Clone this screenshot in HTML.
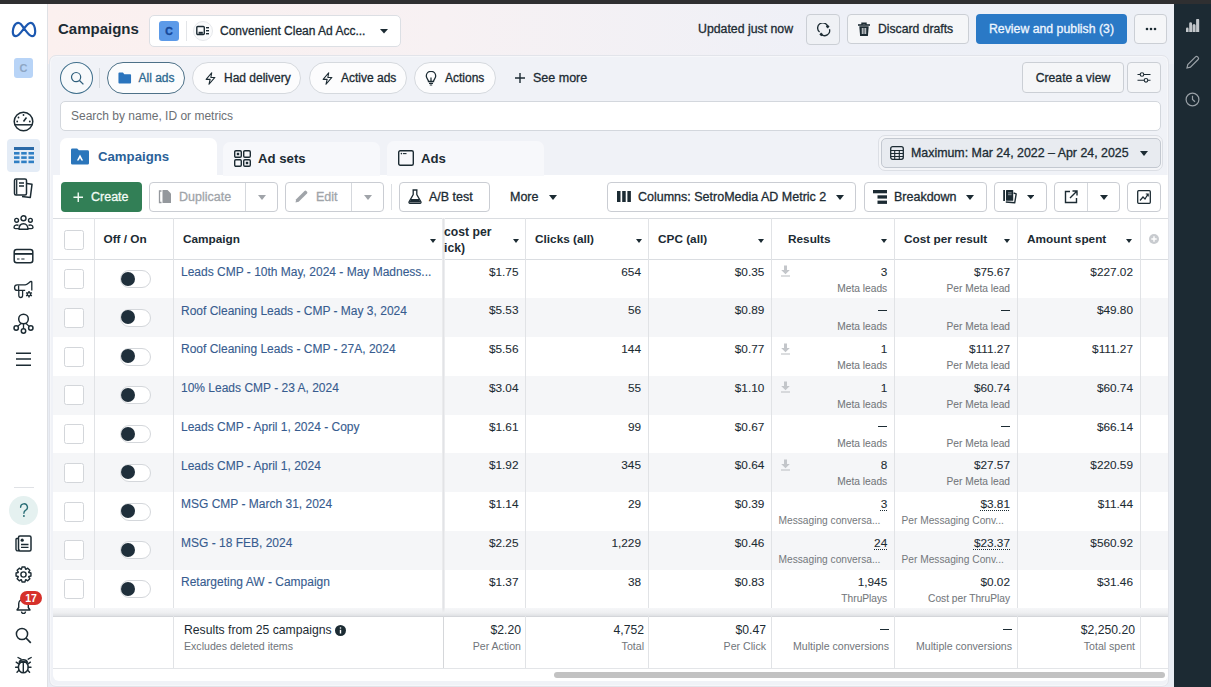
<!DOCTYPE html>
<html><head><meta charset="utf-8">
<style>
*{box-sizing:border-box;margin:0;padding:0}
html,body{width:1211px;height:687px;overflow:hidden;background:#e9edf4;font-family:"Liberation Sans",sans-serif;color:#1c2b33;position:relative}
.a{position:absolute}
.topbar{left:0;top:0;width:1211px;height:4px;background:#2f2f31}
.lsb{left:0;top:4px;width:48px;height:683px;background:#fff;border-right:1px solid #dfe1e5}
.rsb{left:1174px;top:4px;width:37px;height:683px;background:#1c2a33}
.hdr{left:48px;top:4px;width:1126px;height:60px;background:linear-gradient(90deg,#fbf0ef 0%,#f7f1f3 35%,#eef0f7 70%,#edf0f6 100%)}
.panel{left:49px;top:55px;width:1120px;height:632px;background:#f0f2f7;border:1px solid #e2e4ea;border-radius:7px;box-shadow:inset 0 0 0 1px #f6f7fa}
.btn{-webkit-text-stroke:0.3px currentColor;position:absolute;background:#f5f6f8;border:1px solid #cbcfd5;border-radius:4px;font-size:12.2px;color:#1c2b33;display:flex;align-items:center;white-space:nowrap}
.wbtn{position:absolute;background:#fff;border:1px solid #cacdd3;border-radius:4px;font-size:12.5px;color:#1c2b33;display:flex;align-items:center;white-space:nowrap}
.pill{-webkit-text-stroke:0.3px currentColor;position:absolute;top:62px;height:32px;border:1px solid #d5d9de;border-radius:16px;background:#fcfcfd;font-size:12px;display:flex;align-items:center;white-space:nowrap;color:#1c2b33}
svg{display:block}
.t{position:absolute;white-space:nowrap}
.m{-webkit-text-stroke:0.3px currentColor}
</style></head><body>
<div class="a hdr"></div>
<div class="a topbar"></div>
<div class="a lsb"></div>
<div class="a rsb"></div>
<div class="a panel"></div>

<!-- header -->
<div class="t" style="left:58px;top:20px;font-size:15px;font-weight:700;color:#1c2b33">Campaigns</div>
<div class="a" style="left:149px;top:15px;width:252px;height:32px;background:#fff;border:1px solid #dcdfe4;border-radius:5px"></div>
<div class="a" style="left:159px;top:21px;width:20px;height:20px;background:#5c9ae8;border-radius:3px;color:#17499a;font-size:10.5px;font-weight:700;text-align:center;line-height:20px;-webkit-text-stroke:0.4px #17499a">C</div>
<div class="a" style="left:186px;top:21px;width:1px;height:20px;background:#e3e5e8"></div>
<div class="a" style="left:193px;top:21px;width:20px;height:20px;border-radius:50%;background:#fafbfc;border:1px solid #e6e8eb"></div>
<svg class="a" style="left:196px;top:25px" width="14" height="12" viewBox="0 0 14 12"><rect x="0.8" y="1.5" width="7.5" height="8" rx="1" fill="none" stroke="#1c2b33" stroke-width="1.4"/><rect x="2.6" y="6.8" width="4.2" height="2" fill="#1c2b33"/><rect x="10" y="2" width="3" height="1.4" fill="#1c2b33"/><rect x="10" y="5" width="3" height="1.4" fill="#1c2b33"/><rect x="10" y="8" width="3" height="1.4" fill="#1c2b33"/></svg>
<div class="t m" style="left:220px;top:24px;font-size:12px;color:#1c2b33">Convenient Clean Ad Acc...</div>
<svg class="a" style="left:380px;top:29px" width="8" height="5" viewBox="0 0 9 6" preserveAspectRatio="none"><path d="M0 0H9L4.5 5.5Z" fill="#1c2b33"/></svg>

<div class="t m" style="left:698px;top:22px;font-size:12.3px;color:#1c2b33">Updated just now</div>
<div class="btn" style="left:806px;top:14px;width:34px;height:31px;justify-content:center;border-radius:4px;background:#eff1f5">
<svg width="15" height="15" viewBox="0 0 16 16" style="margin-left:2px;margin-top:1px"><path d="M11.39 3.67A5.5 5.5 0 1 0 2.77 9.7" fill="none" stroke="#1c2b33" stroke-width="1.4"/><path d="M13.34 6.67A5.5 5.5 0 0 1 4.46 12.21" fill="none" stroke="#1c2b33" stroke-width="1.4"/><rect x="10" y="2.4" width="2.8" height="2.8" fill="#1c2b33" transform="rotate(-52 11.4 3.8)"/><rect x="3.1" y="10.8" width="2.8" height="2.8" fill="#1c2b33" transform="rotate(130 4.5 12.2)"/></svg></div>
<div class="btn" style="left:847px;top:14px;width:122px;height:30px;padding-left:9px">
<svg width="14" height="15" viewBox="0 0 14 15"><path d="M1 3H13" stroke="#1c2b33" stroke-width="1.6"/><path d="M5 3V1.3H9V3" fill="none" stroke="#1c2b33" stroke-width="1.4"/><path d="M2.3 4.2H11.7L10.9 14H3.1Z" fill="#1c2b33"/><path d="M5.3 6V12M7 6V12M8.7 6V12" stroke="#f5f6f8" stroke-width="0.9"/></svg>
<span class="m" style="margin-left:7px">Discard drafts</span></div>
<div class="a" style="left:976px;top:14px;width:151px;height:30px;background:#2a79c6;border-radius:4px;color:#eef6ff;font-size:12.3px;text-align:center;line-height:31px;-webkit-text-stroke:0.3px #eef6ff">Review and publish (3)</div>
<div class="btn" style="left:1134px;top:14px;width:33px;height:30px;justify-content:center"><svg width="12" height="4" viewBox="0 0 12 4"><circle cx="2" cy="2" r="1.3" fill="#1c2b33"/><circle cx="6" cy="2" r="1.3" fill="#1c2b33"/><circle cx="10" cy="2" r="1.3" fill="#1c2b33"/></svg></div>

<!-- right sidebar icons -->
<svg class="a" style="left:1185px;top:19px" width="15" height="14" viewBox="0 0 15 14"><path d="M1 13V9.8A0.8 0.8 0 0 1 3.6 9.8V13ZM4.2 13V4.6A1.4 1.4 0 0 1 7 4.6V13ZM7.5 13V6.5A1.4 1.4 0 0 1 10.6 6.5V13ZM11.1 13V1.2A0.6 0.6 0 0 1 14.2 1.2V13Z" fill="#c3c7cb"/></svg>
<svg class="a" style="left:1185px;top:55px" width="15" height="15" viewBox="0 0 15 15"><path d="M2 13L2.8 9.6L10.5 1.9A1.5 1.5 0 0 1 12.6 1.9L13.1 2.4A1.5 1.5 0 0 1 13.1 4.5L5.4 12.2Z" fill="none" stroke="#9aa1a7" stroke-width="1.2"/></svg>
<svg class="a" style="left:1185px;top:92px" width="15" height="15" viewBox="0 0 15 15"><circle cx="7.5" cy="7.5" r="6.4" fill="none" stroke="#9aa1a7" stroke-width="1.2"/><path d="M7.5 3.8V7.5L10 9.8" fill="none" stroke="#9aa1a7" stroke-width="1.2"/></svg>

<!-- left sidebar -->
<svg class="a" style="left:11px;top:21px" width="26" height="17" viewBox="0 0 26 17"><path d="M13 7.5C11 4 9.5 1.8 7.3 1.8C3.8 1.8 1.8 7 1.8 10.8C1.8 13.6 3.1 15.2 5 15.2C7.5 15.2 9.5 12 13 7.5C16 3.5 17.5 1.8 19.6 1.8C22.6 1.8 24.2 6.6 24.2 10.2C24.2 13.4 23.1 15.2 21 15.2C18.5 15.2 16.5 12 13 7.5Z" fill="none" stroke="#1c58b0" stroke-width="2.2" stroke-linejoin="round"/></svg>
<div class="a" style="left:14px;top:58px;width:19px;height:20px;background:#b8d4f7;border-radius:3px;color:#8ea6c4;font-size:11px;font-weight:700;text-align:center;line-height:20px">C</div>
<svg class="a" style="left:13px;top:111px" width="21" height="21" viewBox="0 0 21 21"><circle cx="10.5" cy="10.5" r="9.3" fill="none" stroke="#1c2b33" stroke-width="1.5"/><path d="M1.8 13.8H19.2" stroke="#1c2b33" stroke-width="1.5"/><path d="M10.5 10.5L13.5 6.5" stroke="#1c2b33" stroke-width="1.5"/><circle cx="10.5" cy="4" r="0.9" fill="#1c2b33"/><circle cx="5.5" cy="6.5" r="0.9" fill="#1c2b33"/><circle cx="4.2" cy="10.5" r="0.9" fill="#1c2b33"/><circle cx="16.8" cy="10.5" r="0.9" fill="#1c2b33"/></svg>
<div class="a" style="left:7px;top:139px;width:33px;height:33px;background:#e4ecf6;border-radius:4px"></div>
<svg class="a" style="left:14px;top:147px" width="20" height="17" viewBox="0 0 20 17"><rect x="0" y="0" width="20" height="3" fill="#2a6aa8"/><rect x="0" y="5" width="5.5" height="2.6" fill="#2f7fc4"/><rect x="7.2" y="5" width="5.5" height="2.6" fill="#2f7fc4"/><rect x="14.5" y="5" width="5.5" height="2.6" fill="#2f7fc4"/><rect x="0" y="9.3" width="5.5" height="2.6" fill="#2f7fc4"/><rect x="7.2" y="9.3" width="5.5" height="2.6" fill="#2f7fc4"/><rect x="14.5" y="9.3" width="5.5" height="2.6" fill="#2f7fc4"/><rect x="0" y="13.6" width="5.5" height="2.6" fill="#2f7fc4"/><rect x="7.2" y="13.6" width="5.5" height="2.6" fill="#2f7fc4"/><rect x="14.5" y="13.6" width="5.5" height="2.6" fill="#2f7fc4"/></svg>
<svg class="a" style="left:13px;top:178px" width="21" height="21" viewBox="0 0 21 21"><path d="M7 4.5L19 6.3L17.3 19.5L9 18.5" fill="#fff" stroke="#1c2b33" stroke-width="1.5" stroke-linejoin="round"/><rect x="1.5" y="1" width="12" height="16" rx="1.5" fill="#fff" stroke="#1c2b33" stroke-width="1.5"/><path d="M3.7 1.5V16.5" stroke="#1c2b33" stroke-width="1.3"/><path d="M6 5H11M6 8H11" stroke="#1c2b33" stroke-width="1.3"/></svg>
<svg class="a" style="left:13px;top:215px" width="21" height="16" viewBox="0 0 21 16"><circle cx="10.5" cy="3.2" r="2.5" fill="none" stroke="#1c2b33" stroke-width="1.4"/><circle cx="3.6" cy="5.3" r="1.9" fill="none" stroke="#1c2b33" stroke-width="1.4"/><circle cx="17.4" cy="5.3" r="1.9" fill="none" stroke="#1c2b33" stroke-width="1.4"/><path d="M6 14.3C6 10.5 7.8 8.8 10.5 8.8C13.2 8.8 15 10.5 15 14.3Z" fill="none" stroke="#1c2b33" stroke-width="1.4" stroke-linejoin="round"/><path d="M5.5 10.5C4.5 9.5 1 9.8 1 12.5C1 13.3 1.5 13.6 2.5 13.6H6" fill="none" stroke="#1c2b33" stroke-width="1.4"/><path d="M15.5 10.5C16.5 9.5 20 9.8 20 12.5C20 13.3 19.5 13.6 18.5 13.6H15" fill="none" stroke="#1c2b33" stroke-width="1.4"/></svg>
<svg class="a" style="left:13px;top:248px" width="21" height="16" viewBox="0 0 21 16"><rect x="1.2" y="1.5" width="18.6" height="13.2" rx="2.5" fill="none" stroke="#1c2b33" stroke-width="1.5"/><rect x="1" y="5" width="19" height="1.8" fill="#1c2b33"/><path d="M4 11H6.5M8.3 11H11.5" stroke="#1c2b33" stroke-width="1.2"/></svg>
<svg class="a" style="left:13px;top:280px" width="21" height="19" viewBox="0 0 21 19"><path d="M12.2 10.4H4.3A2.75 2.75 0 0 1 4.3 4.9H12.2C14.5 4.9 16 2.2 18 1.4Q18.8 1.1 18.8 2V10.4" fill="none" stroke="#1c2b33" stroke-width="1.3" stroke-linejoin="round"/><path d="M5.6 5.4V10.4" stroke="#1c2b33" stroke-width="1.3"/><path d="M5.8 10.4V15.6A1.9 1.9 0 0 0 9.6 15.6V10.4" fill="none" stroke="#1c2b33" stroke-width="1.3"/><g transform="translate(16,14.3)"><circle r="2.3" fill="#1c2b33"/><path d="M0 -3.3V3.3M-2.86 -1.65L2.86 1.65M-2.86 1.65L2.86 -1.65" stroke="#1c2b33" stroke-width="1.5"/><circle r="1" fill="#fff"/></g></svg>
<svg class="a" style="left:13px;top:313px" width="21" height="21" viewBox="0 0 21 21"><circle cx="10.5" cy="6" r="4.8" fill="none" stroke="#1c2b33" stroke-width="1.5"/><circle cx="3.2" cy="15" r="2.2" fill="none" stroke="#1c2b33" stroke-width="1.5"/><circle cx="10.5" cy="18" r="2.2" fill="none" stroke="#1c2b33" stroke-width="1.5"/><circle cx="17.8" cy="15" r="2.2" fill="none" stroke="#1c2b33" stroke-width="1.5"/><path d="M10.5 10.8V15.8M8.2 10.2L4.8 13.4M12.8 10.2L16.2 13.4" stroke="#1c2b33" stroke-width="1.3"/></svg>
<svg class="a" style="left:15px;top:351px" width="17" height="16" viewBox="0 0 17 16"><path d="M1 2.3H16M1 8H16M1 14.3H16" stroke="#1c2b33" stroke-width="1.4"/></svg>
<div class="a" style="left:14px;top:487px;width:20px;height:1px;background:#dfe1e5"></div>
<div class="a" style="left:9px;top:496px;width:29px;height:29px;border-radius:50%;background:#e5f1f0"></div>
<svg class="a" style="left:19px;top:503px" width="10" height="15" viewBox="0 0 10 15"><path d="M1.6 4.2A3.4 3.4 0 1 1 6.4 7.3C5.3 8 4.9 8.6 4.9 10.2" fill="none" stroke="#2b6e76" stroke-width="1.4" stroke-linecap="round"/><circle cx="4.9" cy="13" r="0.95" fill="#2b6e76"/></svg>
<svg class="a" style="left:15px;top:535px" width="17" height="17" viewBox="0 0 17 17"><path d="M3.5 3.5H1.8A1 1 0 0 0 1 4.5V14.5A1.8 1.8 0 0 0 4.5 14.5" fill="none" stroke="#1c2b33" stroke-width="1.4"/><rect x="3.5" y="1" width="12.5" height="15" rx="1.5" fill="none" stroke="#1c2b33" stroke-width="1.5"/><circle cx="7.2" cy="5.2" r="1.6" fill="#1c2b33"/><path d="M6 9.5H13.5M6 12.3H13.5" stroke="#1c2b33" stroke-width="1.3"/></svg>
<svg class="a" style="left:15px;top:566px" width="17" height="17" viewBox="0 0 17 17"><path d="M15.95 6.99 L15.95 10.01 L13.83 10.51 L13.69 10.85 L14.83 12.70 L12.70 14.83 L10.85 13.69 L10.51 13.83 L10.01 15.95 L6.99 15.95 L6.49 13.83 L6.15 13.69 L4.30 14.83 L2.17 12.70 L3.31 10.85 L3.17 10.51 L1.05 10.01 L1.05 6.99 L3.17 6.49 L3.31 6.15 L2.17 4.30 L4.30 2.17 L6.15 3.31 L6.49 3.17 L6.99 1.05 L10.01 1.05 L10.51 3.17 L10.85 3.31 L12.70 2.17 L14.83 4.30 L13.69 6.15 L13.83 6.49Z" fill="none" stroke="#1c2b33" stroke-width="1.4" stroke-linejoin="round"/><circle cx="8.5" cy="8.5" r="2.6" fill="none" stroke="#1c2b33" stroke-width="1.4"/></svg>
<svg class="a" style="left:15px;top:597px" width="17" height="17" viewBox="0 0 17 17"><path d="M2 13H15L13.3 10.5V7A4.8 4.8 0 0 0 3.7 7V10.5Z" fill="none" stroke="#1c2b33" stroke-width="1.4" stroke-linejoin="round"/><path d="M6.5 14.5A2 2 0 0 0 10.5 14.5" fill="none" stroke="#1c2b33" stroke-width="1.4"/></svg>
<div class="a" style="left:20px;top:591px;width:22px;height:14px;border-radius:7px;background:#d6312b;color:#fff;font-size:10.5px;font-weight:700;text-align:center;line-height:14px">17</div>
<svg class="a" style="left:15px;top:627px" width="17" height="17" viewBox="0 0 17 17"><circle cx="7" cy="7" r="5.6" fill="none" stroke="#1c2b33" stroke-width="1.5"/><path d="M11 11L15.8 15.8" stroke="#1c2b33" stroke-width="1.7"/></svg>
<svg class="a" style="left:13px;top:655px" width="21" height="19" viewBox="0 0 21 19"><path d="M5 2.5L8 4.2M18.2 2.5L15.2 4.2" stroke="#1c2b33" stroke-width="1.4" stroke-linecap="round"/><ellipse cx="10.3" cy="12.2" rx="4.9" ry="5.6" fill="none" stroke="#1c2b33" stroke-width="1.5"/><path d="M6.2 7.3A4.2 3.4 0 0 1 14.4 7.3Z" fill="none" stroke="#1c2b33" stroke-width="1.5" stroke-linejoin="round"/><path d="M10.3 7.3V17.6" stroke="#1c2b33" stroke-width="1.4"/><path d="M5.6 8.8L3.2 7.2M5.4 12.2H2.6M5.9 15.2L4 17.2M15 8.8L17.4 7.2M15.2 12.2H18M14.7 15.2L16.6 17.2" stroke="#1c2b33" stroke-width="1.4" stroke-linecap="round"/></svg>

<!-- filter row -->
<div class="a" style="left:60px;top:62px;width:33px;height:32px;border-radius:50%;border:1px solid #3f6f8c;background:#f7f9fb"></div>
<svg class="a" style="left:70px;top:71px" width="15" height="15" viewBox="0 0 16 16"><circle cx="6.5" cy="6.5" r="4.9" fill="none" stroke="#2f5f7c" stroke-width="1.3"/><path d="M10.1 10.1L14.3 14.3" stroke="#2f5f7c" stroke-width="1.4"/></svg>
<div class="a" style="left:99px;top:68px;width:1px;height:20px;background:#d5d9de"></div>
<div class="pill" style="left:107px;width:78px;border-color:#4d7188;background:#fbfcfd;padding-left:10px;color:#2b6890">
<svg width="13.5" height="12" viewBox="0 0 15 13"><path d="M0.5 1.5A1 1 0 0 1 1.5 0.5H5.5L7 2.2H13.5A1 1 0 0 1 14.5 3.2V11.5A1 1 0 0 1 13.5 12.5H1.5A1 1 0 0 1 0.5 11.5Z" fill="#2a74bd"/></svg><span style="margin-left:7px">All ads</span></div>
<div class="pill" style="left:192px;width:109px;padding-left:10px">
<svg width="13" height="15" viewBox="0 0 14 15" style="margin-left:1px"><path d="M8.3 1.3L2.3 8.4H6.6L5.4 13.7L11.7 6.4H7.4Z" fill="none" stroke="#1c2b33" stroke-width="1.2" stroke-linejoin="round"/></svg><span style="margin-left:7px">Had delivery</span></div>
<div class="pill" style="left:309px;width:98px;padding-left:10px">
<svg width="13" height="15" viewBox="0 0 14 15" style="margin-left:1px"><path d="M8.3 1.3L2.3 8.4H6.6L5.4 13.7L11.7 6.4H7.4Z" fill="none" stroke="#1c2b33" stroke-width="1.2" stroke-linejoin="round"/></svg><span style="margin-left:7px">Active ads</span></div>
<div class="pill" style="left:414px;width:82px;padding-left:10px">
<svg width="12" height="15" viewBox="0 0 12 15"><path d="M3.5 10.5C3.5 8.5 1.3 7.5 1.3 5A4.7 4.7 0 0 1 10.7 5C10.7 7.5 8.5 8.5 8.5 10.5Z" fill="none" stroke="#1c2b33" stroke-width="1.3"/><path d="M4 12.3H8M4.8 14H7.2M6 10.5V6.5" stroke="#1c2b33" stroke-width="1.2"/></svg><span style="margin-left:8px">Actions</span></div>
<svg class="a" style="left:514px;top:72px" width="12" height="12" viewBox="0 0 12 12"><path d="M6 1V11M1 6H11" stroke="#1c2b33" stroke-width="1.4"/></svg>
<div class="t m" style="left:533px;top:71px;font-size:12.5px;color:#1c2b33">See more</div>
<div class="btn" style="left:1022px;top:62px;width:102px;height:31px;justify-content:center">Create a view</div>
<div class="btn" style="left:1127px;top:62px;width:34px;height:31px;justify-content:center"><svg width="14" height="11" viewBox="0 0 14 11"><path d="M0.5 2.5H13.5M0.5 8.3H13.5" stroke="#1c2b33" stroke-width="1.1"/><circle cx="5" cy="2.5" r="1.8" fill="#f5f6f8" stroke="#1c2b33" stroke-width="1.1"/><circle cx="9" cy="8.3" r="1.8" fill="#f5f6f8" stroke="#1c2b33" stroke-width="1.1"/></svg></div>
<div class="a" style="left:60px;top:101px;width:1101px;height:30px;background:#fff;border:1px solid #d3d7dd;border-radius:5px"></div>
<div class="t" style="left:71px;top:109px;font-size:12px;color:#6c7074">Search by name, ID or metrics</div>

<!-- tabs -->
<div class="a" style="left:53px;top:175px;width:1115px;height:506px;background:#fff;border-radius:0 0 6px 6px"></div>
<div class="a" style="left:60px;top:138px;width:157px;height:40px;background:#fff;border-radius:7px 7px 0 0"></div>
<div class="a" style="left:223px;top:142px;width:157px;height:34px;background:#f7f8fb;border-radius:7px 7px 0 0"></div>
<div class="a" style="left:387px;top:141px;width:157px;height:35px;background:#f7f8fb;border-radius:7px 7px 0 0"></div>
<svg class="a" style="left:71px;top:148px" width="18" height="17" viewBox="0 0 19 17"><path d="M0 1.5A1.5 1.5 0 0 1 1.5 0H6.5L8.3 2H17.5A1.5 1.5 0 0 1 19 3.5V15.5A1.5 1.5 0 0 1 17.5 17H1.5A1.5 1.5 0 0 1 0 15.5Z" fill="#2b76bb"/><path d="M9.5 6.3L6.2 12.6H8.1L9.5 10L10.9 12.6H12.8Z" fill="#fff"/></svg>
<div class="t" style="left:98px;top:149px;font-size:13.2px;font-weight:700;color:#2a6198">Campaigns</div>
<svg class="a" style="left:234px;top:150px" width="17" height="17" viewBox="0 0 17 17"><rect x="0.7" y="0.7" width="6.6" height="6.6" rx="1.2" fill="none" stroke="#1c2b33" stroke-width="1.4"/><rect x="9.7" y="0.7" width="6.6" height="6.6" rx="1.2" fill="none" stroke="#1c2b33" stroke-width="1.4"/><rect x="0.7" y="9.7" width="6.6" height="6.6" rx="1.2" fill="none" stroke="#1c2b33" stroke-width="1.4"/><rect x="9.7" y="9.7" width="6.6" height="6.6" rx="1.2" fill="none" stroke="#1c2b33" stroke-width="1.4"/><rect x="2.8" y="2.8" width="2.4" height="2.4" fill="#1c2b33"/><rect x="11.8" y="11.8" width="2.4" height="2.4" fill="#1c2b33"/></svg>
<div class="t" style="left:258px;top:151px;font-size:13.2px;font-weight:700;color:#1c2b33">Ad sets</div>
<svg class="a" style="left:398px;top:150px" width="16" height="16" viewBox="0 0 16 16"><rect x="0.7" y="0.7" width="14.6" height="14.6" rx="1.5" fill="none" stroke="#1c2b33" stroke-width="1.4"/><circle cx="3.4" cy="3.6" r="0.8" fill="#1c2b33"/><path d="M5 3.6H8.5" stroke="#1c2b33" stroke-width="1.1"/></svg>
<div class="t" style="left:421px;top:151px;font-size:13.2px;font-weight:700;color:#1c2b33">Ads</div>

<!-- date picker -->
<div class="a" style="left:878px;top:135px;width:285px;height:36px;background:#f4f5f8;border:1px solid #dcdfe5;border-radius:7px"></div>
<div class="a" style="left:881px;top:138px;width:280px;height:30px;background:#e8ebf0;border:1px solid #c3c8d0;border-radius:5px"></div>
<svg class="a" style="left:890px;top:146px" width="14" height="14" viewBox="0 0 14 14"><rect x="0.7" y="0.7" width="12.6" height="12.6" rx="2" fill="none" stroke="#1c2b33" stroke-width="1.3"/><path d="M1 4.5H13M1 7.5H13M1 10.5H13M4.7 4.5V13M9.3 4.5V13" stroke="#1c2b33" stroke-width="1.1"/></svg>
<div class="t m" style="left:911px;top:146px;font-size:12.4px;color:#1c2b33">Maximum: Mar 24, 2022 – Apr 24, 2025</div>
<svg class="a" style="left:1140px;top:151px" width="8" height="5" viewBox="0 0 8 5"><path d="M0 0H8L4 5Z" fill="#1c2b33"/></svg>

<!-- toolbar -->
<div class="a" style="left:61px;top:182px;width:81px;height:30px;background:#327f56;border-radius:4px;color:#f2fbf5;font-size:12.5px;line-height:31px;padding-left:30px;-webkit-text-stroke:0.3px #f2fbf5">Create</div>
<svg class="a" style="left:72.5px;top:192px" width="10.5" height="10.5" viewBox="0 0 12 12"><path d="M6 0.5V11.5M0.5 6H11.5" stroke="#f2fbf5" stroke-width="1.6"/></svg>
<div class="wbtn" style="left:149px;top:182px;width:129px;height:30px"></div>
<div class="a" style="left:245px;top:183px;width:1px;height:28px;background:#d5d8dd"></div>
<svg class="a" style="left:158px;top:189px" width="15" height="15" viewBox="0 0 15 15"><path d="M3.5 2H1.5V13.5H3.5" fill="none" stroke="#94989d" stroke-width="1.3"/><path d="M4.5 1H9.5L13 4.5V14H4.5Z" fill="#94989d"/></svg>
<div class="t m" style="left:179px;top:190px;font-size:12.5px;color:#a0a4a9">Duplicate</div>
<svg class="a" style="left:257.5px;top:194.5px" width="8" height="5" viewBox="0 0 8 5"><path d="M0 0H8L4 5Z" fill="#a0a4a9"/></svg>
<div class="wbtn" style="left:285px;top:182px;width:99px;height:30px"></div>
<div class="a" style="left:351px;top:183px;width:1px;height:28px;background:#d5d8dd"></div>
<svg class="a" style="left:294px;top:189px" width="15" height="15" viewBox="0 0 15 15"><path d="M1.5 13.5L2.2 10.3L10.5 2A1.3 1.3 0 0 1 12.3 2L13 2.7A1.3 1.3 0 0 1 13 4.5L4.7 12.8Z" fill="#a0a4a9"/></svg>
<div class="t m" style="left:316px;top:190px;font-size:12.5px;color:#a0a4a9">Edit</div>
<svg class="a" style="left:363.5px;top:194.5px" width="8" height="5" viewBox="0 0 8 5"><path d="M0 0H8L4 5Z" fill="#a0a4a9"/></svg>
<div class="a" style="left:391px;top:184px;width:1px;height:26px;background:#dcdfe3"></div>
<div class="wbtn" style="left:399px;top:182px;width:91px;height:30px"></div>
<svg class="a" style="left:408px;top:189px" width="14" height="15" viewBox="0 0 14 15"><path d="M4.5 1H9.5M5.2 1V5.5L1 13A1 1 0 0 0 1.9 14.3H12.1A1 1 0 0 0 13 13L8.8 5.5V1" fill="none" stroke="#1c2b33" stroke-width="1.3"/><path d="M3 10H11L12.5 13.5H1.5Z" fill="#1c2b33"/></svg>
<div class="t m" style="left:429px;top:190px;font-size:12.5px;color:#1c2b33">A/B test</div>
<div class="t m" style="left:510px;top:190px;font-size:12.5px;color:#1c2b33">More</div>
<svg class="a" style="left:548.5px;top:194.5px" width="8" height="5" viewBox="0 0 8 5"><path d="M0 0H8L4 5Z" fill="#1c2b33"/></svg>
<div class="wbtn" style="left:607px;top:182px;width:249px;height:30px"></div>
<svg class="a" style="left:617px;top:191px" width="14" height="11" viewBox="0 0 14 13" preserveAspectRatio="none"><rect x="0" y="0" width="3.5" height="13" fill="#1c2b33"/><rect x="5.2" y="0" width="3.5" height="13" fill="#1c2b33"/><rect x="10.4" y="0" width="3.5" height="13" fill="#1c2b33"/></svg>
<div class="t m" style="left:638px;top:190px;font-size:12.5px;color:#1c2b33">Columns: SetroMedia AD Metric 2</div>
<svg class="a" style="left:835.5px;top:194.5px" width="8" height="5" viewBox="0 0 8 5"><path d="M0 0H8L4 5Z" fill="#1c2b33"/></svg>
<div class="wbtn" style="left:864px;top:182px;width:123px;height:30px"></div>
<svg class="a" style="left:873px;top:190px" width="14" height="14" viewBox="0 0 14 14"><rect x="0" y="0" width="14" height="3.3" fill="#1c2b33"/><rect x="4.5" y="5.3" width="9.5" height="3.3" fill="#1c2b33"/><rect x="4.5" y="10.6" width="9.5" height="3.3" fill="#1c2b33"/></svg>
<div class="t m" style="left:894px;top:190px;font-size:12.5px;color:#1c2b33">Breakdown</div>
<svg class="a" style="left:965.5px;top:194.5px" width="8" height="5" viewBox="0 0 8 5"><path d="M0 0H8L4 5Z" fill="#1c2b33"/></svg>
<div class="wbtn" style="left:994px;top:182px;width:53px;height:30px"></div>
<svg class="a" style="left:1002px;top:189px" width="16" height="16" viewBox="0 0 16 16"><rect x="1.2" y="1" width="1.8" height="11" fill="#1c2b33"/><rect x="4" y="1" width="7.2" height="10.8" rx="0.5" fill="#1c2b33"/><path d="M6 3.9H9.6M6 5.7H9.6" stroke="#aab1b8" stroke-width="0.8"/><path d="M11.6 4L14.2 4.8L12.7 13.8L3.8 13" fill="none" stroke="#1c2b33" stroke-width="1.4" stroke-linejoin="round"/></svg>
<svg class="a" style="left:1026.5px;top:195px" width="7.5" height="4.5" viewBox="0 0 9 6" preserveAspectRatio="none"><path d="M0 0H9L4.5 5.5Z" fill="#1c2b33"/></svg>
<div class="wbtn" style="left:1054px;top:182px;width:66px;height:30px"></div>
<div class="a" style="left:1087px;top:183px;width:1px;height:28px;background:#d5d8dd"></div>
<svg class="a" style="left:1064px;top:190px" width="14" height="14" viewBox="0 0 14 14"><path d="M6 1.5H1.5V12.5H12.5V8" fill="none" stroke="#1c2b33" stroke-width="1.4"/><path d="M6 8L12.5 1.5M8.5 1H13V5.5" fill="none" stroke="#1c2b33" stroke-width="1.4"/></svg>
<svg class="a" style="left:1099.5px;top:194.5px" width="8" height="5" viewBox="0 0 8 5"><path d="M0 0H8L4 5Z" fill="#1c2b33"/></svg>
<div class="wbtn" style="left:1127px;top:182px;width:34px;height:30px"></div>
<svg class="a" style="left:1137px;top:190px" width="14" height="14" viewBox="0 0 14 14"><rect x="0.7" y="0.7" width="12.6" height="12.6" rx="1" fill="none" stroke="#1c2b33" stroke-width="1.3"/><path d="M3 10.5L6 7L8 9L11 4M8.8 4H11.2V6.4" fill="none" stroke="#1c2b33" stroke-width="1.2"/></svg>

<!-- TABLE START -->
<div class="a" style="left:53px;top:259.6px;width:1115px;height:38.75px;background:#fff"></div>
<div class="a" style="left:53px;top:298.35px;width:1115px;height:38.75px;background:#f5f6f8"></div>
<div class="a" style="left:53px;top:337.1px;width:1115px;height:38.75px;background:#fff"></div>
<div class="a" style="left:53px;top:375.85px;width:1115px;height:38.75px;background:#f5f6f8"></div>
<div class="a" style="left:53px;top:414.6px;width:1115px;height:38.75px;background:#fff"></div>
<div class="a" style="left:53px;top:453.35px;width:1115px;height:38.75px;background:#f5f6f8"></div>
<div class="a" style="left:53px;top:492.1px;width:1115px;height:38.75px;background:#fff"></div>
<div class="a" style="left:53px;top:530.85px;width:1115px;height:38.75px;background:#f5f6f8"></div>
<div class="a" style="left:53px;top:569.6px;width:1115px;height:38.75px;background:#fff"></div>
<div class="a" style="left:53px;top:608.35px;width:1115px;height:38.75px;background:#f5f6f8"></div>
<div class="a" style="left:53px;top:218px;width:1115px;height:41.6px;background:#fff;border-top:1px solid #dadde1;border-bottom:1px solid #dadde1"></div>
<div class="a" style="left:93.8px;top:218px;width:1px;height:390px;background:#e1e3e6"></div>
<div class="a" style="left:173px;top:218px;width:1px;height:390px;background:#e1e3e6"></div>
<div class="a" style="left:525.3px;top:218px;width:1px;height:390px;background:#e1e3e6"></div>
<div class="a" style="left:647.8px;top:218px;width:1px;height:390px;background:#e1e3e6"></div>
<div class="a" style="left:771.1px;top:218px;width:1px;height:390px;background:#e1e3e6"></div>
<div class="a" style="left:894px;top:218px;width:1px;height:390px;background:#e1e3e6"></div>
<div class="a" style="left:1016.9px;top:218px;width:1px;height:390px;background:#e1e3e6"></div>
<div class="a" style="left:1139.8px;top:218px;width:1px;height:390px;background:#e1e3e6"></div>
<div class="a" style="left:442px;top:218px;width:3px;height:450px;background:linear-gradient(90deg,#eeeff1,#e2e3e6 50%,#f1f2f4)"></div>
<div class="a" style="left:64px;top:229.5px;width:20px;height:20px;border:1px solid #d3d6da;border-radius:2.5px;background:#fff"></div>
<div class="t" style="left:103.5px;top:232px;font-size:11.8px;font-weight:700;color:#1c2b33">Off / On</div>
<div class="t" style="left:183px;top:232px;font-size:11.8px;font-weight:700;color:#1c2b33">Campaign</div>
<svg class="a" style="left:429.5px;top:238.5px" width="6" height="4" viewBox="0 0 6 4"><path d="M0 0H6L3 4Z" fill="#1c2b33"/></svg>
<div class="t" style="left:444px;top:225px;font-size:12.2px;font-weight:700;line-height:15.5px;color:#1c2b33">cost per<br>ick)</div>
<svg class="a" style="left:512.5px;top:238.5px" width="6" height="4" viewBox="0 0 6 4"><path d="M0 0H6L3 4Z" fill="#1c2b33"/></svg>
<div class="t" style="left:535px;top:232px;font-size:11.8px;font-weight:700;color:#1c2b33">Clicks (all)</div>
<svg class="a" style="left:635.6px;top:238.5px" width="6" height="4" viewBox="0 0 6 4"><path d="M0 0H6L3 4Z" fill="#1c2b33"/></svg>
<div class="t" style="left:658px;top:232px;font-size:11.8px;font-weight:700;color:#1c2b33">CPC (all)</div>
<svg class="a" style="left:758px;top:238.5px" width="6" height="4" viewBox="0 0 6 4"><path d="M0 0H6L3 4Z" fill="#1c2b33"/></svg>
<div class="t" style="left:788px;top:232px;font-size:11.8px;font-weight:700;color:#1c2b33">Results</div>
<svg class="a" style="left:880.6px;top:238.5px" width="6" height="4" viewBox="0 0 6 4"><path d="M0 0H6L3 4Z" fill="#1c2b33"/></svg>
<div class="t" style="left:904px;top:232px;font-size:11.8px;font-weight:700;color:#1c2b33">Cost per result</div>
<svg class="a" style="left:1003.5px;top:238.5px" width="6" height="4" viewBox="0 0 6 4"><path d="M0 0H6L3 4Z" fill="#1c2b33"/></svg>
<div class="t" style="left:1027px;top:232px;font-size:11.8px;font-weight:700;color:#1c2b33">Amount spent</div>
<svg class="a" style="left:1126.4px;top:238.5px" width="6" height="4" viewBox="0 0 6 4"><path d="M0 0H6L3 4Z" fill="#1c2b33"/></svg>
<svg class="a" style="left:1149px;top:234px" width="10" height="10" viewBox="0 0 10 10"><circle cx="5" cy="5" r="5" fill="#c8cbcf"/><path d="M5 2.3V7.7M2.3 5H7.7" stroke="#fff" stroke-width="1.4"/></svg>
<div class="a" style="left:64px;top:269.2px;width:20px;height:20px;border:1px solid #d3d6da;border-radius:2.5px;background:#fff"></div>
<div class="a" style="left:119.5px;top:270.1px;width:31px;height:18px;border:1px solid #d4d7db;border-radius:9px;background:#fff"></div>
<div class="a" style="left:121px;top:271.6px;width:14px;height:14px;border-radius:50%;background:#1f2f3b"></div>
<div class="t" style="left:181px;top:264.94px;font-size:12px;color:#375c8f;-webkit-text-stroke:0.12px #375c8f">Leads CMP - 10th May, 2024 - May Madness...</div>
<div class="t" style="right:692.5px;top:264.72px;font-size:11.8px;color:#1c2b33;-webkit-text-stroke:0.08px #1c2b33;">$1.75</div>
<div class="t" style="right:570px;top:264.72px;font-size:11.8px;color:#1c2b33;-webkit-text-stroke:0.08px #1c2b33;">654</div>
<div class="t" style="right:446.7px;top:264.72px;font-size:11.8px;color:#1c2b33;-webkit-text-stroke:0.08px #1c2b33;">$0.35</div>
<div class="t" style="right:323.8px;top:264.72px;font-size:11.8px;color:#1c2b33;-webkit-text-stroke:0.08px #1c2b33;">3</div>
<div class="t" style="right:323.8px;top:282.57px;font-size:10.2px;color:#74787c;-webkit-text-stroke:0.08px #74787c;">Meta leads</div>
<svg class="a" style="left:780px;top:265.1px" width="11" height="12" viewBox="0 0 11 12"><path d="M4 0.5H7V5H9.8L5.5 9.3L1.2 5H4Z" fill="#c3c6ca"/><path d="M1 11H10" stroke="#c3c6ca" stroke-width="1.2"/></svg>
<div class="t" style="right:201px;top:264.72px;font-size:11.8px;color:#1c2b33;-webkit-text-stroke:0.08px #1c2b33;">$75.67</div>
<div class="t" style="right:201px;top:282.57px;font-size:10.2px;color:#74787c;-webkit-text-stroke:0.08px #74787c;">Per Meta lead</div>
<div class="t" style="right:78px;top:264.72px;font-size:11.8px;color:#1c2b33;-webkit-text-stroke:0.08px #1c2b33;">$227.02</div>
<div class="a" style="left:64px;top:307.95px;width:20px;height:20px;border:1px solid #d3d6da;border-radius:2.5px;background:#fff"></div>
<div class="a" style="left:119.5px;top:308.85px;width:31px;height:18px;border:1px solid #d4d7db;border-radius:9px;background:#fff"></div>
<div class="a" style="left:121px;top:310.35px;width:14px;height:14px;border-radius:50%;background:#1f2f3b"></div>
<div class="t" style="left:181px;top:303.69px;font-size:12px;color:#375c8f;-webkit-text-stroke:0.12px #375c8f">Roof Cleaning Leads - CMP - May 3, 2024</div>
<div class="t" style="right:692.5px;top:303.47px;font-size:11.8px;color:#1c2b33;-webkit-text-stroke:0.08px #1c2b33;">$5.53</div>
<div class="t" style="right:570px;top:303.47px;font-size:11.8px;color:#1c2b33;-webkit-text-stroke:0.08px #1c2b33;">56</div>
<div class="t" style="right:446.7px;top:303.47px;font-size:11.8px;color:#1c2b33;-webkit-text-stroke:0.08px #1c2b33;">$0.89</div>
<div class="a" style="left:877.5px;top:309.55px;width:9.5px;height:1.7px;background:#1c2b33"></div>
<div class="t" style="right:323.8px;top:321.32px;font-size:10.2px;color:#74787c;-webkit-text-stroke:0.08px #74787c;">Meta leads</div>
<div class="a" style="left:1000.5px;top:309.55px;width:9.5px;height:1.7px;background:#1c2b33"></div>
<div class="t" style="right:201px;top:321.32px;font-size:10.2px;color:#74787c;-webkit-text-stroke:0.08px #74787c;">Per Meta lead</div>
<div class="t" style="right:78px;top:303.47px;font-size:11.8px;color:#1c2b33;-webkit-text-stroke:0.08px #1c2b33;">$49.80</div>
<div class="a" style="left:64px;top:346.7px;width:20px;height:20px;border:1px solid #d3d6da;border-radius:2.5px;background:#fff"></div>
<div class="a" style="left:119.5px;top:347.6px;width:31px;height:18px;border:1px solid #d4d7db;border-radius:9px;background:#fff"></div>
<div class="a" style="left:121px;top:349.1px;width:14px;height:14px;border-radius:50%;background:#1f2f3b"></div>
<div class="t" style="left:181px;top:342.44px;font-size:12px;color:#375c8f;-webkit-text-stroke:0.12px #375c8f">Roof Cleaning Leads - CMP - 27A, 2024</div>
<div class="t" style="right:692.5px;top:342.22px;font-size:11.8px;color:#1c2b33;-webkit-text-stroke:0.08px #1c2b33;">$5.56</div>
<div class="t" style="right:570px;top:342.22px;font-size:11.8px;color:#1c2b33;-webkit-text-stroke:0.08px #1c2b33;">144</div>
<div class="t" style="right:446.7px;top:342.22px;font-size:11.8px;color:#1c2b33;-webkit-text-stroke:0.08px #1c2b33;">$0.77</div>
<div class="t" style="right:323.8px;top:342.22px;font-size:11.8px;color:#1c2b33;-webkit-text-stroke:0.08px #1c2b33;">1</div>
<div class="t" style="right:323.8px;top:360.07px;font-size:10.2px;color:#74787c;-webkit-text-stroke:0.08px #74787c;">Meta leads</div>
<svg class="a" style="left:780px;top:342.6px" width="11" height="12" viewBox="0 0 11 12"><path d="M4 0.5H7V5H9.8L5.5 9.3L1.2 5H4Z" fill="#c3c6ca"/><path d="M1 11H10" stroke="#c3c6ca" stroke-width="1.2"/></svg>
<div class="t" style="right:201px;top:342.22px;font-size:11.8px;color:#1c2b33;-webkit-text-stroke:0.08px #1c2b33;">$111.27</div>
<div class="t" style="right:201px;top:360.07px;font-size:10.2px;color:#74787c;-webkit-text-stroke:0.08px #74787c;">Per Meta lead</div>
<div class="t" style="right:78px;top:342.22px;font-size:11.8px;color:#1c2b33;-webkit-text-stroke:0.08px #1c2b33;">$111.27</div>
<div class="a" style="left:64px;top:385.45px;width:20px;height:20px;border:1px solid #d3d6da;border-radius:2.5px;background:#fff"></div>
<div class="a" style="left:119.5px;top:386.35px;width:31px;height:18px;border:1px solid #d4d7db;border-radius:9px;background:#fff"></div>
<div class="a" style="left:121px;top:387.85px;width:14px;height:14px;border-radius:50%;background:#1f2f3b"></div>
<div class="t" style="left:181px;top:381.19px;font-size:12px;color:#375c8f;-webkit-text-stroke:0.12px #375c8f">10% Leads CMP - 23 A, 2024</div>
<div class="t" style="right:692.5px;top:380.97px;font-size:11.8px;color:#1c2b33;-webkit-text-stroke:0.08px #1c2b33;">$3.04</div>
<div class="t" style="right:570px;top:380.97px;font-size:11.8px;color:#1c2b33;-webkit-text-stroke:0.08px #1c2b33;">55</div>
<div class="t" style="right:446.7px;top:380.97px;font-size:11.8px;color:#1c2b33;-webkit-text-stroke:0.08px #1c2b33;">$1.10</div>
<div class="t" style="right:323.8px;top:380.97px;font-size:11.8px;color:#1c2b33;-webkit-text-stroke:0.08px #1c2b33;">1</div>
<div class="t" style="right:323.8px;top:398.82px;font-size:10.2px;color:#74787c;-webkit-text-stroke:0.08px #74787c;">Meta leads</div>
<svg class="a" style="left:780px;top:381.35px" width="11" height="12" viewBox="0 0 11 12"><path d="M4 0.5H7V5H9.8L5.5 9.3L1.2 5H4Z" fill="#c3c6ca"/><path d="M1 11H10" stroke="#c3c6ca" stroke-width="1.2"/></svg>
<div class="t" style="right:201px;top:380.97px;font-size:11.8px;color:#1c2b33;-webkit-text-stroke:0.08px #1c2b33;">$60.74</div>
<div class="t" style="right:201px;top:398.82px;font-size:10.2px;color:#74787c;-webkit-text-stroke:0.08px #74787c;">Per Meta lead</div>
<div class="t" style="right:78px;top:380.97px;font-size:11.8px;color:#1c2b33;-webkit-text-stroke:0.08px #1c2b33;">$60.74</div>
<div class="a" style="left:64px;top:424.2px;width:20px;height:20px;border:1px solid #d3d6da;border-radius:2.5px;background:#fff"></div>
<div class="a" style="left:119.5px;top:425.1px;width:31px;height:18px;border:1px solid #d4d7db;border-radius:9px;background:#fff"></div>
<div class="a" style="left:121px;top:426.6px;width:14px;height:14px;border-radius:50%;background:#1f2f3b"></div>
<div class="t" style="left:181px;top:419.94px;font-size:12px;color:#375c8f;-webkit-text-stroke:0.12px #375c8f">Leads CMP - April 1, 2024 - Copy</div>
<div class="t" style="right:692.5px;top:419.72px;font-size:11.8px;color:#1c2b33;-webkit-text-stroke:0.08px #1c2b33;">$1.61</div>
<div class="t" style="right:570px;top:419.72px;font-size:11.8px;color:#1c2b33;-webkit-text-stroke:0.08px #1c2b33;">99</div>
<div class="t" style="right:446.7px;top:419.72px;font-size:11.8px;color:#1c2b33;-webkit-text-stroke:0.08px #1c2b33;">$0.67</div>
<div class="a" style="left:877.5px;top:425.8px;width:9.5px;height:1.7px;background:#1c2b33"></div>
<div class="t" style="right:323.8px;top:437.57px;font-size:10.2px;color:#74787c;-webkit-text-stroke:0.08px #74787c;">Meta leads</div>
<div class="a" style="left:1000.5px;top:425.8px;width:9.5px;height:1.7px;background:#1c2b33"></div>
<div class="t" style="right:201px;top:437.57px;font-size:10.2px;color:#74787c;-webkit-text-stroke:0.08px #74787c;">Per Meta lead</div>
<div class="t" style="right:78px;top:419.72px;font-size:11.8px;color:#1c2b33;-webkit-text-stroke:0.08px #1c2b33;">$66.14</div>
<div class="a" style="left:64px;top:462.95px;width:20px;height:20px;border:1px solid #d3d6da;border-radius:2.5px;background:#fff"></div>
<div class="a" style="left:119.5px;top:463.85px;width:31px;height:18px;border:1px solid #d4d7db;border-radius:9px;background:#fff"></div>
<div class="a" style="left:121px;top:465.35px;width:14px;height:14px;border-radius:50%;background:#1f2f3b"></div>
<div class="t" style="left:181px;top:458.69px;font-size:12px;color:#375c8f;-webkit-text-stroke:0.12px #375c8f">Leads CMP - April 1, 2024</div>
<div class="t" style="right:692.5px;top:458.47px;font-size:11.8px;color:#1c2b33;-webkit-text-stroke:0.08px #1c2b33;">$1.92</div>
<div class="t" style="right:570px;top:458.47px;font-size:11.8px;color:#1c2b33;-webkit-text-stroke:0.08px #1c2b33;">345</div>
<div class="t" style="right:446.7px;top:458.47px;font-size:11.8px;color:#1c2b33;-webkit-text-stroke:0.08px #1c2b33;">$0.64</div>
<div class="t" style="right:323.8px;top:458.47px;font-size:11.8px;color:#1c2b33;-webkit-text-stroke:0.08px #1c2b33;">8</div>
<div class="t" style="right:323.8px;top:476.32px;font-size:10.2px;color:#74787c;-webkit-text-stroke:0.08px #74787c;">Meta leads</div>
<svg class="a" style="left:780px;top:458.85px" width="11" height="12" viewBox="0 0 11 12"><path d="M4 0.5H7V5H9.8L5.5 9.3L1.2 5H4Z" fill="#c3c6ca"/><path d="M1 11H10" stroke="#c3c6ca" stroke-width="1.2"/></svg>
<div class="t" style="right:201px;top:458.47px;font-size:11.8px;color:#1c2b33;-webkit-text-stroke:0.08px #1c2b33;">$27.57</div>
<div class="t" style="right:201px;top:476.32px;font-size:10.2px;color:#74787c;-webkit-text-stroke:0.08px #74787c;">Per Meta lead</div>
<div class="t" style="right:78px;top:458.47px;font-size:11.8px;color:#1c2b33;-webkit-text-stroke:0.08px #1c2b33;">$220.59</div>
<div class="a" style="left:64px;top:501.7px;width:20px;height:20px;border:1px solid #d3d6da;border-radius:2.5px;background:#fff"></div>
<div class="a" style="left:119.5px;top:502.6px;width:31px;height:18px;border:1px solid #d4d7db;border-radius:9px;background:#fff"></div>
<div class="a" style="left:121px;top:504.1px;width:14px;height:14px;border-radius:50%;background:#1f2f3b"></div>
<div class="t" style="left:181px;top:497.44px;font-size:12px;color:#375c8f;-webkit-text-stroke:0.12px #375c8f">MSG CMP - March 31, 2024</div>
<div class="t" style="right:692.5px;top:497.22px;font-size:11.8px;color:#1c2b33;-webkit-text-stroke:0.08px #1c2b33;">$1.14</div>
<div class="t" style="right:570px;top:497.22px;font-size:11.8px;color:#1c2b33;-webkit-text-stroke:0.08px #1c2b33;">29</div>
<div class="t" style="right:446.7px;top:497.22px;font-size:11.8px;color:#1c2b33;-webkit-text-stroke:0.08px #1c2b33;">$0.39</div>
<div class="t" style="right:323.8px;top:497.22px;font-size:11.8px;color:#1c2b33;-webkit-text-stroke:0.08px #1c2b33;text-decoration:underline dotted #1c2b33;text-underline-offset:2px">3</div>
<div class="t" style="left:778.5px;top:515.07px;font-size:10.2px;color:#74787c">Messaging conversa...</div>
<div class="t" style="right:201px;top:497.22px;font-size:11.8px;color:#1c2b33;-webkit-text-stroke:0.08px #1c2b33;text-decoration:underline dotted #1c2b33;text-underline-offset:2px">$3.81</div>
<div class="t" style="left:901.5px;top:515.07px;font-size:10.2px;color:#74787c">Per Messaging Conv...</div>
<div class="t" style="right:78px;top:497.22px;font-size:11.8px;color:#1c2b33;-webkit-text-stroke:0.08px #1c2b33;">$11.44</div>
<div class="a" style="left:64px;top:540.45px;width:20px;height:20px;border:1px solid #d3d6da;border-radius:2.5px;background:#fff"></div>
<div class="a" style="left:119.5px;top:541.35px;width:31px;height:18px;border:1px solid #d4d7db;border-radius:9px;background:#fff"></div>
<div class="a" style="left:121px;top:542.85px;width:14px;height:14px;border-radius:50%;background:#1f2f3b"></div>
<div class="t" style="left:181px;top:536.19px;font-size:12px;color:#375c8f;-webkit-text-stroke:0.12px #375c8f">MSG - 18 FEB, 2024</div>
<div class="t" style="right:692.5px;top:535.97px;font-size:11.8px;color:#1c2b33;-webkit-text-stroke:0.08px #1c2b33;">$2.25</div>
<div class="t" style="right:570px;top:535.97px;font-size:11.8px;color:#1c2b33;-webkit-text-stroke:0.08px #1c2b33;">1,229</div>
<div class="t" style="right:446.7px;top:535.97px;font-size:11.8px;color:#1c2b33;-webkit-text-stroke:0.08px #1c2b33;">$0.46</div>
<div class="t" style="right:323.8px;top:535.97px;font-size:11.8px;color:#1c2b33;-webkit-text-stroke:0.08px #1c2b33;text-decoration:underline dotted #1c2b33;text-underline-offset:2px">24</div>
<div class="t" style="left:778.5px;top:553.82px;font-size:10.2px;color:#74787c">Messaging conversa...</div>
<div class="t" style="right:201px;top:535.97px;font-size:11.8px;color:#1c2b33;-webkit-text-stroke:0.08px #1c2b33;text-decoration:underline dotted #1c2b33;text-underline-offset:2px">$23.37</div>
<div class="t" style="left:901.5px;top:553.82px;font-size:10.2px;color:#74787c">Per Messaging Conv...</div>
<div class="t" style="right:78px;top:535.97px;font-size:11.8px;color:#1c2b33;-webkit-text-stroke:0.08px #1c2b33;">$560.92</div>
<div class="a" style="left:64px;top:579.2px;width:20px;height:20px;border:1px solid #d3d6da;border-radius:2.5px;background:#fff"></div>
<div class="a" style="left:119.5px;top:580.1px;width:31px;height:18px;border:1px solid #d4d7db;border-radius:9px;background:#fff"></div>
<div class="a" style="left:121px;top:581.6px;width:14px;height:14px;border-radius:50%;background:#1f2f3b"></div>
<div class="t" style="left:181px;top:574.94px;font-size:12px;color:#375c8f;-webkit-text-stroke:0.12px #375c8f">Retargeting AW - Campaign</div>
<div class="t" style="right:692.5px;top:574.72px;font-size:11.8px;color:#1c2b33;-webkit-text-stroke:0.08px #1c2b33;">$1.37</div>
<div class="t" style="right:570px;top:574.72px;font-size:11.8px;color:#1c2b33;-webkit-text-stroke:0.08px #1c2b33;">38</div>
<div class="t" style="right:446.7px;top:574.72px;font-size:11.8px;color:#1c2b33;-webkit-text-stroke:0.08px #1c2b33;">$0.83</div>
<div class="t" style="right:323.8px;top:574.72px;font-size:11.8px;color:#1c2b33;-webkit-text-stroke:0.08px #1c2b33;">1,945</div>
<div class="t" style="right:323.8px;top:592.57px;font-size:10.2px;color:#74787c;-webkit-text-stroke:0.08px #74787c;">ThruPlays</div>
<div class="t" style="right:201px;top:574.72px;font-size:11.8px;color:#1c2b33;-webkit-text-stroke:0.08px #1c2b33;">$0.02</div>
<div class="t" style="right:201px;top:592.57px;font-size:10.2px;color:#74787c;-webkit-text-stroke:0.08px #74787c;">Cost per ThruPlay</div>
<div class="t" style="right:78px;top:574.72px;font-size:11.8px;color:#1c2b33;-webkit-text-stroke:0.08px #1c2b33;">$31.46</div>
<div class="a" style="left:64px;top:617.95px;width:20px;height:20px;border:1px solid #d3d6da;border-radius:2.5px;background:#fff"></div>
<div class="a" style="left:119.5px;top:618.85px;width:31px;height:18px;border:1px solid #d4d7db;border-radius:9px;background:#fff"></div>
<div class="a" style="left:121px;top:620.35px;width:14px;height:14px;border-radius:50%;background:#1f2f3b"></div>
<div class="t" style="left:181px;top:613.69px;font-size:12px;color:#375c8f;-webkit-text-stroke:0.12px #375c8f">Retargeting - Video Views</div>
<div class="t" style="right:692.5px;top:613.47px;font-size:11.8px;color:#1c2b33;-webkit-text-stroke:0.08px #1c2b33;">$1.20</div>
<div class="t" style="right:570px;top:613.47px;font-size:11.8px;color:#1c2b33;-webkit-text-stroke:0.08px #1c2b33;">120</div>
<div class="t" style="right:446.7px;top:613.47px;font-size:11.8px;color:#1c2b33;-webkit-text-stroke:0.08px #1c2b33;">$0.30</div>
<div class="a" style="left:877.5px;top:619.55px;width:9.5px;height:1.7px;background:#1c2b33"></div>
<div class="t" style="right:323.8px;top:631.32px;font-size:10.2px;color:#74787c;-webkit-text-stroke:0.08px #74787c;">Meta leads</div>
<div class="a" style="left:1000.5px;top:619.55px;width:9.5px;height:1.7px;background:#1c2b33"></div>
<div class="t" style="right:201px;top:631.32px;font-size:10.2px;color:#74787c;-webkit-text-stroke:0.08px #74787c;">Per Meta lead</div>
<div class="t" style="right:78px;top:613.47px;font-size:11.8px;color:#1c2b33;-webkit-text-stroke:0.08px #1c2b33;">$31.46</div>
<div class="a" style="left:53px;top:608px;width:1115px;height:8px;background:linear-gradient(180deg,rgba(240,241,243,0),#eeeff1 60%,#dfe1e4)"></div>
<div class="a" style="left:53px;top:615.5px;width:1115px;height:53.5px;background:#fff;border-top:1px solid #d4d6da;border-bottom:1px solid #e3e5e8"></div>
<div class="a" style="left:173px;top:616px;width:1px;height:52px;background:#e1e3e6"></div>
<div class="a" style="left:525.3px;top:616px;width:1px;height:52px;background:#e1e3e6"></div>
<div class="a" style="left:647.8px;top:616px;width:1px;height:52px;background:#e1e3e6"></div>
<div class="a" style="left:771.1px;top:616px;width:1px;height:52px;background:#e1e3e6"></div>
<div class="a" style="left:894px;top:616px;width:1px;height:52px;background:#e1e3e6"></div>
<div class="a" style="left:1016.9px;top:616px;width:1px;height:52px;background:#e1e3e6"></div>
<div class="a" style="left:1139.8px;top:616px;width:1px;height:52px;background:#e1e3e6"></div>
<div class="a" style="left:443px;top:616px;width:1px;height:52px;background:#d5d7da"></div>
<div class="t" style="left:184px;top:623px;font-size:12.2px;color:#1c2b33">Results from 25 campaigns</div>
<svg class="a" style="left:335px;top:625px" width="11" height="11" viewBox="0 0 11 11"><circle cx="5.5" cy="5.5" r="5.5" fill="#1c2b33"/><path d="M5.5 4.8V8.5" stroke="#fff" stroke-width="1.4"/><circle cx="5.5" cy="3" r="0.8" fill="#fff"/></svg>
<div class="t" style="left:184px;top:640px;font-size:10.6px;color:#71757a">Excludes deleted items</div>
<div class="t" style="right:690px;top:623px;font-size:12.2px;color:#1c2b33">$2.20</div>
<div class="t" style="right:690px;top:640px;font-size:10.6px;color:#71757a">Per Action</div>
<div class="t" style="right:567px;top:623px;font-size:12.2px;color:#1c2b33">4,752</div>
<div class="t" style="right:567px;top:640px;font-size:10.6px;color:#71757a">Total</div>
<div class="t" style="right:445px;top:623px;font-size:12.2px;color:#1c2b33">$0.47</div>
<div class="t" style="right:445px;top:640px;font-size:10.6px;color:#71757a">Per Click</div>
<div class="a" style="left:879.5px;top:628.5px;width:9.5px;height:1.7px;background:#1c2b33"></div>
<div class="t" style="right:322px;top:640px;font-size:10.6px;color:#71757a">Multiple conversions</div>
<div class="a" style="left:1002.5px;top:628.5px;width:9.5px;height:1.7px;background:#1c2b33"></div>
<div class="t" style="right:199px;top:640px;font-size:10.6px;color:#71757a">Multiple conversions</div>
<div class="t" style="right:76px;top:623px;font-size:12.2px;color:#1c2b33">$2,250.20</div>
<div class="t" style="right:76px;top:640px;font-size:10.6px;color:#71757a">Total spent</div>
<div class="a" style="left:554px;top:672px;width:611px;height:6px;border-radius:3px;background:#c2c2c2"></div>
<!-- TABLE END -->
</body></html>
